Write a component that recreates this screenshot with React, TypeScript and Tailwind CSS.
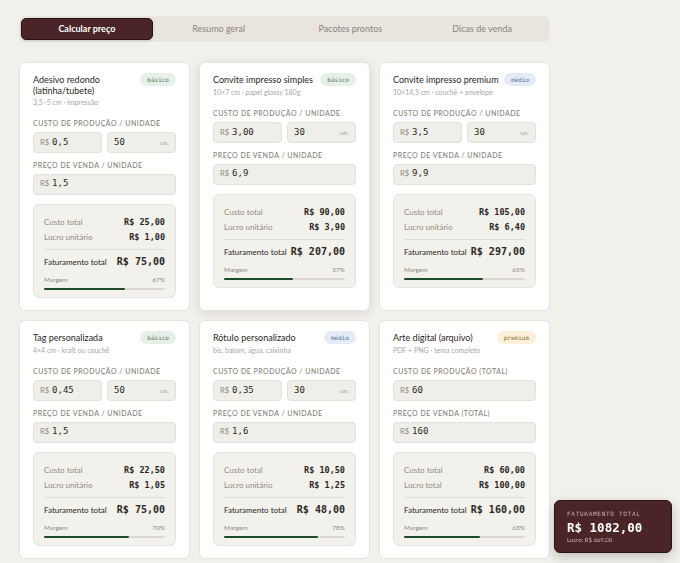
import React from 'react';

type Item = {
  title: string;
  sub: string;
  tier: 'básico' | 'médio' | 'premium';
  total?: boolean;
  cost: string;
  qty?: string;
  price: string;
  custo: string;
  lucroLabel: string;
  lucro: string;
  fat: string;
  margem: number;
  hover?: boolean;
};

const items: Item[] = [
  {
    title: 'Adesivo redondo (latinha/tubete)',
    sub: '3,5–5 cm · impressão',
    tier: 'básico',
    cost: '0,5',
    qty: '50',
    price: '1,5',
    custo: 'R$ 25,00',
    lucroLabel: 'Lucro unitário',
    lucro: 'R$ 1,00',
    fat: 'R$ 75,00',
    margem: 67,
  },
  {
    title: 'Convite impresso simples',
    sub: '10×7 cm · papel glossy 180g',
    tier: 'básico',
    cost: '3,00',
    qty: '30',
    price: '6,9',
    custo: 'R$ 90,00',
    lucroLabel: 'Lucro unitário',
    lucro: 'R$ 3,90',
    fat: 'R$ 207,00',
    margem: 57,
    hover: true,
  },
  {
    title: 'Convite impresso premium',
    sub: '10×14,5 cm · couchê + envelope',
    tier: 'médio',
    cost: '3,5',
    qty: '30',
    price: '9,9',
    custo: 'R$ 105,00',
    lucroLabel: 'Lucro unitário',
    lucro: 'R$ 6,40',
    fat: 'R$ 297,00',
    margem: 65,
  },
  {
    title: 'Tag personalizada',
    sub: '4×4 cm · kraft ou couchê',
    tier: 'básico',
    cost: '0,45',
    qty: '50',
    price: '1,5',
    custo: 'R$ 22,50',
    lucroLabel: 'Lucro unitário',
    lucro: 'R$ 1,05',
    fat: 'R$ 75,00',
    margem: 70,
  },
  {
    title: 'Rótulo personalizado',
    sub: 'bis, batom, água, caixinha',
    tier: 'médio',
    cost: '0,35',
    qty: '30',
    price: '1,6',
    custo: 'R$ 10,50',
    lucroLabel: 'Lucro unitário',
    lucro: 'R$ 1,25',
    fat: 'R$ 48,00',
    margem: 78,
  },
  {
    title: 'Arte digital (arquivo)',
    sub: 'PDF + PNG · tema completo',
    tier: 'premium',
    total: true,
    cost: '60',
    price: '160',
    custo: 'R$ 60,00',
    lucroLabel: 'Lucro total',
    lucro: 'R$ 100,00',
    fat: 'R$ 160,00',
    margem: 63,
  },
];

const sans = 'font-[Lato,"Noto_Sans",sans-serif]';
const mono = 'font-["DejaVu_Sans_Mono","Liberation_Mono",monospace]';

const tierStyle = {
  básico: 'bg-[#e6efe8] text-[#5d7a64]',
  médio: 'bg-[#e4ebf7] text-[#58709a]',
  premium: 'bg-[#fcf0da] text-[#8c6a38]',
};

function Field({ value, suffix }: { value: string; suffix?: string }) {
  return (
    <div className="flex h-[21px] flex-1 items-center rounded-[4px] border border-[#e3e0d9] bg-[#f0eee9] px-[6px]">
      {!suffix && <span className="mr-[3px] text-[7.5px] text-[#8d8882]">R$</span>}
      <span className={`${mono} text-[9px] text-[#2b2623]`}>{value}</span>
      {suffix && <span className="ml-auto text-[6.5px] text-[#a7a29b]">{suffix}</span>}
    </div>
  );
}

function Label({ children }: { children: React.ReactNode }) {
  return (
    <div className="whitespace-nowrap text-[7px] font-medium uppercase leading-[9px] tracking-[0.07em] text-[#857f78]">
      {children}
    </div>
  );
}

function Card({ it }: { it: Item }) {
  return (
    <div
      className={`flex flex-col rounded-[6px] border border-[#e6e3dd] bg-white px-[13px] pb-[12px] pt-[11px] ${
        it.hover ? 'shadow-[0_2px_10px_rgba(60,40,30,0.12)]' : ''
      }`}
    >
      <div className="flex items-start justify-between gap-1">
        <div className="text-[9px] leading-[11px] text-[#2b2623]">{it.title}</div>
        <span
          className={`${mono} ${tierStyle[it.tier]} mt-[-1px] shrink-0 rounded-full px-[7px] text-[6px] leading-[13px]`}
        >
          {it.tier}
        </span>
      </div>
      <div className="mt-[1px] whitespace-nowrap text-[7px] leading-[10px] text-[#aaa59e]">{it.sub}</div>

      <div className="mt-[12px]">
        <Label>{it.total ? 'Custo de produção (total)' : 'Custo de produção / unidade'}</Label>
      </div>
      <div className="mt-[4px] flex gap-[5px]">
        <Field value={it.cost} />
        {it.qty && <Field value={it.qty} suffix="un." />}
      </div>

      <div className="mt-[8px]">
        <Label>{it.total ? 'Preço de venda (total)' : 'Preço de venda / unidade'}</Label>
      </div>
      <div className="mt-[3.5px] flex">
        <Field value={it.price} />
      </div>

      <div className="mt-[9px] rounded-[6px] border border-[#e6e3dd] bg-[#f3f1ec] px-[10px] pb-[7px] pt-[11px]">
        <div className="flex items-center justify-between whitespace-nowrap leading-[12px]">
          <span className="text-[8px] text-[#928c85]">Custo total</span>
          <span className={`${mono} text-[8.5px] font-semibold text-[#2b2623]`}>{it.custo}</span>
        </div>
        <div className="mt-[3px] flex items-center justify-between whitespace-nowrap leading-[12px]">
          <span className="text-[8px] text-[#928c85]">{it.lucroLabel}</span>
          <span className={`${mono} text-[8.5px] font-semibold text-[#2b2623]`}>{it.lucro}</span>
        </div>
        <div className="mt-[6px] border-t border-[#e1ddd6]" />
        <div className="mt-[5px] flex items-center justify-between gap-1 whitespace-nowrap leading-[14px]">
          <span className="text-[8px] text-[#2b2623]">Faturamento total</span>
          <span className={`${mono} text-[10px] font-semibold text-[#2b2623]`}>{it.fat}</span>
        </div>
        <div className="mt-[6px] flex items-center justify-between leading-[9px]">
          <span className="text-[6.5px] text-[#8d8882]">Margem</span>
          <span className="text-[6.5px] text-[#8d8882]">{it.margem}%</span>
        </div>
        <div className="mt-[4px] h-[2.5px] rounded-full bg-[#dcd8d1]">
          <div className="h-full rounded-full bg-[#1f4a2a]" style={{ width: `${it.margem}%` }} />
        </div>
      </div>
    </div>
  );
}

export default function App() {
  const tabs = ['Calcular preço', 'Resumo geral', 'Pacotes prontos', 'Dicas de venda'];
  return (
    <div className={`${sans} relative min-h-[563px] bg-[#f2f0eb]`}>
      <div className="ml-[19px] w-[531px] pb-[4px] pt-[16px]">
        <div className="grid grid-cols-4 rounded-[7px] bg-[#e8e5df] p-[2px]">
          {tabs.map((t, i) => (
            <div
              key={t}
              className={`flex h-[22px] items-center justify-center rounded-[5px] text-[9px] ${
                i === 0
                  ? 'border border-[#2a1214] bg-[#4a2427] font-bold text-white shadow-sm'
                  : 'text-[#8a847d]'
              }`}
            >
              {t}
            </div>
          ))}
        </div>

        <div className="mt-[20px] grid grid-cols-3 gap-[9px]">
          {items.map((it) => (
            <Card key={it.title} it={it} />
          ))}
        </div>
      </div>

      <div className="fixed bottom-[10px] right-[8px] w-[118px] rounded-[6px] border border-[#2a1214] bg-[#4a2427] px-[12px] pb-[8px] pt-[9px] shadow-[0_4px_12px_rgba(0,0,0,0.2)]">
        <div className={`${mono} text-[6px] uppercase leading-[8px] tracking-[0.12em] text-[#c8b3b1]`}>
          Faturamento total
        </div>
        <div className={`${mono} mt-[2px] text-[12.5px] font-bold leading-[15px] text-white`}>R$ 1082,00</div>
        <div className="mt-[1px] text-[6px] leading-[8px] text-[#c8b3b1]">Lucro: R$ 669,00</div>
      </div>
    </div>
  );
}
